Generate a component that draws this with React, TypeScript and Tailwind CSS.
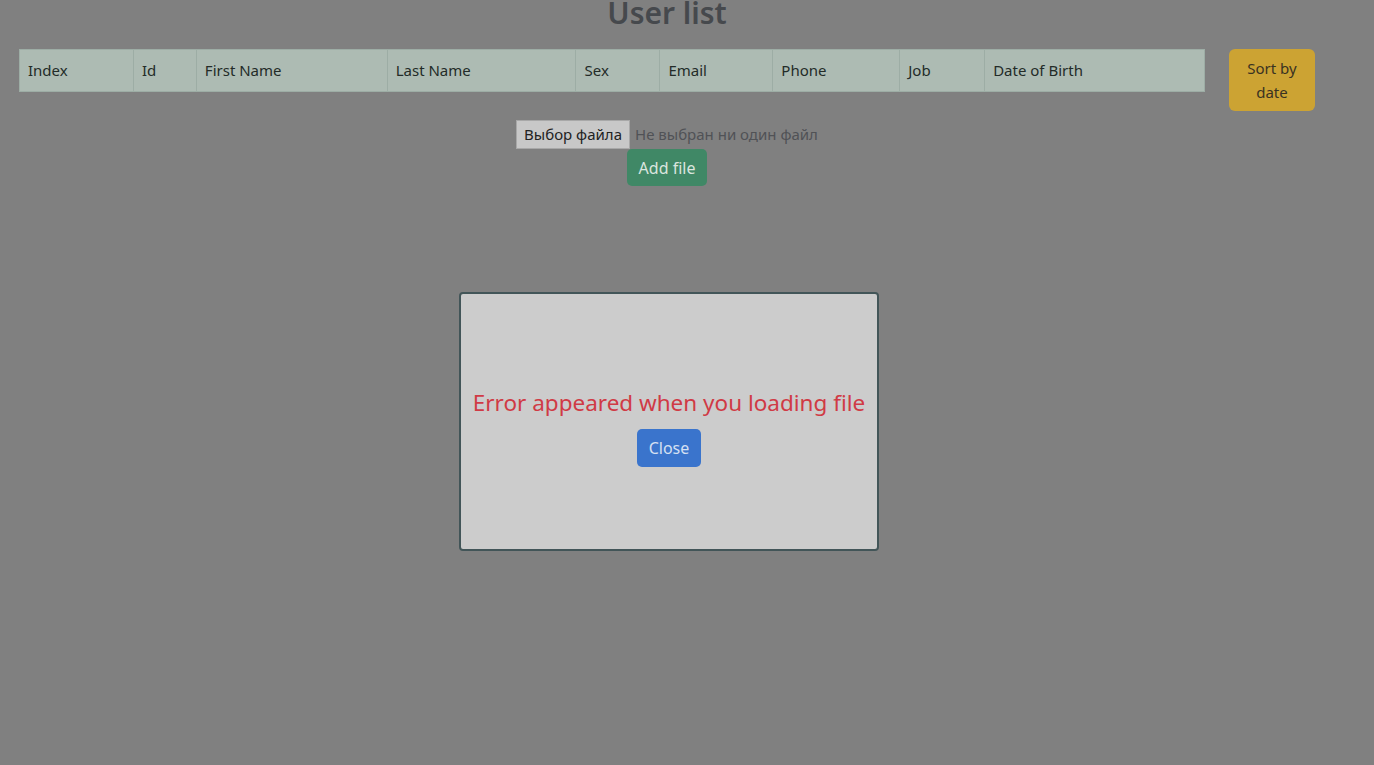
import React from "react";

const columns = [
  { label: "Index", w: 114 },
  { label: "Id", w: 63 },
  { label: "First Name", w: 191 },
  { label: "Last Name", w: 189 },
  { label: "Sex", w: 84 },
  { label: "Email", w: 113 },
  { label: "Phone", w: 127 },
  { label: "Job", w: 85 },
  { label: "Date of Birth", w: 220 },
];

const font = { fontFamily: '"Noto Sans", "Open Sans", sans-serif' };

export default function App() {
  return (
    <div className="min-h-[765px] w-full overflow-hidden bg-[#808080] text-[16px]" style={font}>
      <div className="w-[1334px]">
        <h1 className="mt-[-11px] text-center text-[30px] font-semibold leading-[48px] text-[#46494d]">User list</h1>

        {/* table + sort */}
        <div className="mt-[12px] flex items-start">
          <table className="ml-[19px] w-[1186px] border-collapse">
            <thead>
              <tr className="h-[42px] bg-[#adbbb3]">
                {columns.map((c) => (
                  <th
                    key={c.label}
                    style={{ width: c.w }}
                    className="border border-[#9dada5] px-[8px] pb-[1px] text-left text-[15px] font-normal text-[#232b28]"
                  >
                    {c.label}
                  </th>
                ))}
              </tr>
            </thead>
          </table>
          <button className="ml-[24px] h-[62px] w-[86px] rounded-[6px] bg-[#cca333] text-[15px] leading-[24px] text-[#3a3222]">
            Sort by
            <br />
            date
          </button>
        </div>

        {/* file input */}
        <div className="mt-[9px] flex flex-col items-center">
          <div className="flex items-center">
            <span className="flex h-[29px] items-center border border-[#a8a8a8] bg-[#c8c8c8] px-[7px] text-[15px] text-[#222]">
              Выбор файла
            </span>
            <span className="ml-[5px] text-[15px] text-[#505256]">Не выбран ни один файл</span>
          </div>
          <button className="h-[37px] w-[80px] rounded-[5px] bg-[#408866] text-[#dbe5df]">Add file</button>
        </div>
      </div>

      {/* modal */}
      <div className="fixed left-[459px] top-[292px] flex h-[259px] w-[420px] flex-col items-center justify-center rounded-[4px] border-2 border-[#425558] bg-[#cccccc]">
        <p className="mt-[10px] text-[22.5px] text-[#d03a45]">Error appeared when you loading file</p>
        <button className="mt-[10px] h-[38px] w-[64px] rounded-[5px] bg-[#3a74cc] text-[#d5e0f2]">Close</button>
      </div>
    </div>
  );
}
